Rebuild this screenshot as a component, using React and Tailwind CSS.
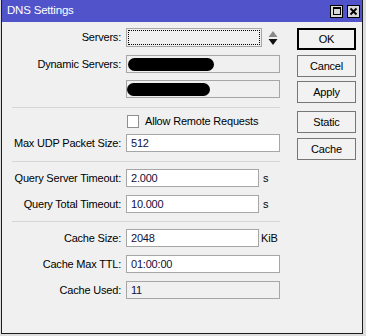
import React from 'react';

const font = { fontFamily: '"Liberation Sans", Arial, sans-serif' };

function Row({ label, top, children }) {
  return (
    <div className={`flex items-center ${top}`}>
      <div className="w-[124px] shrink-0 text-right pr-[5px] leading-none">{label}</div>
      {children}
    </div>
  );
}

function Field({ value, w = 'w-[154px]', white = true, children }) {
  return (
    <div
      className={`${w} h-[18px] shrink-0 border border-[#a6a6a6] flex items-center pl-[4px] text-[#10103a] leading-none relative ${
        white ? 'bg-white' : 'bg-[#f0f0f0]'
      }`}
    >
      {value}
      {children}
    </div>
  );
}

function Btn({ label, def, top }) {
  return (
    <button
      className={`w-[59px] h-[22px] ${top} flex items-center justify-center bg-[#f2f2f2] leading-none text-black ${
        def ? 'border-2 border-black' : 'border border-[#767676]'
      }`}
    >
      {label}
    </button>
  );
}

function Sep({ top }) {
  return <div className={`ml-[10px] w-[268px] h-px bg-[#d6d6d6] ${top}`} />;
}

export default function App() {
  return (
    <div className="w-[366px] h-[336px] bg-[#dedede] pl-[1px] overflow-hidden" style={font}>
      <div className="w-[362px] h-[334px] border-x border-b border-[#1c1c1c] bg-[#f0f0f0] flex flex-col text-[11px] tracking-[-0.2px] text-black">
        {/* title bar */}
        <div className="h-[22px] shrink-0 bg-[#5053c9] flex items-center pl-[5px] pr-[2px]">
          <span className="text-white text-[11.5px] leading-none">DNS Settings</span>
          <div className="ml-auto flex gap-[4px]">
            <div className="w-[13px] h-[13px] bg-[#d9d9d9] border border-black flex items-center justify-center">
              <div className="w-[8px] h-[8px] border border-black border-t-2" />
            </div>
            <div className="w-[13px] h-[13px] bg-[#d9d9d9] border border-black flex items-center justify-center">
              <svg width="9" height="9" viewBox="0 0 9 9">
                <path d="M1.5 1.5 L7.5 7.5 M7.5 1.5 L1.5 7.5" stroke="black" strokeWidth="1.8" />
              </svg>
            </div>
          </div>
        </div>

        {/* body */}
        <div className="flex flex-1">
          <div className="w-[290px] flex flex-col">
            <Row label="Servers:" top="mt-[6px]">
              <div className="w-[136px] h-[19px] border border-[#a6a6a6] bg-[#f0f0f0] p-[1px]">
                <div className="w-full h-full border border-dotted border-black" />
              </div>
              <svg className="ml-[6px]" width="10" height="14" viewBox="0 0 10 14">
                <path d="M5 0 L9.5 6 L0.5 6 Z" fill="#8a8a8a" />
                <path d="M0.5 8 L9.5 8 L5 14 Z" fill="#111" />
              </svg>
            </Row>
            <Row label="Dynamic Servers:" top="mt-[8px]">
              <Field white={false} value="">
                <div className="absolute left-[1px] top-[2px] w-[86px] h-[13px] bg-black rounded-[7px]" />
              </Field>
            </Row>
            <Row label="" top="mt-[7px]">
              <Field white={false} value="">
                <div className="absolute left-[0px] top-[2px] w-[83px] h-[13px] bg-black rounded-[7px]" />
              </Field>
            </Row>
            <Sep top="mt-[9px]" />
            <div className="flex items-center mt-[7px] h-[13px]">
              <div className="w-[125px]" />
              <div className="w-[12px] h-[13px] bg-white border border-[#8f8f8f]" />
              <span className="ml-[6px] leading-none">Allow Remote Requests</span>
            </div>
            <Row label="Max UDP Packet Size:" top="mt-[6px]">
              <Field value="512" />
            </Row>
            <Sep top="mt-[9px]" />
            <Row label="Query Server Timeout:" top="mt-[7px]">
              <Field value="2.000" w="w-[133px]" />
              <span className="ml-[4px] leading-none">s</span>
            </Row>
            <Row label="Query Total Timeout:" top="mt-[8px]">
              <Field value="10.000" w="w-[133px]" />
              <span className="ml-[4px] leading-none">s</span>
            </Row>
            <Sep top="mt-[8px]" />
            <Row label="Cache Size:" top="mt-[7px]">
              <Field value="2048" w="w-[133px]" />
              <span className="ml-[2px] leading-none">KiB</span>
            </Row>
            <Row label="Cache Max TTL:" top="mt-[8px]">
              <Field value="01:00:00" />
            </Row>
            <Row label="Cache Used:" top="mt-[8px]">
              <Field value="11" white={false} />
            </Row>
          </div>

          <div className="flex flex-col ml-[5px]">
            <Btn label="OK" def top="mt-[6px]" />
            <Btn label="Cancel" top="mt-[5px]" />
            <Btn label="Apply" top="mt-[4px]" />
            <Btn label="Static" top="mt-[8px]" />
            <Btn label="Cache" top="mt-[5px]" />
          </div>
        </div>
      </div>
    </div>
  );
}
